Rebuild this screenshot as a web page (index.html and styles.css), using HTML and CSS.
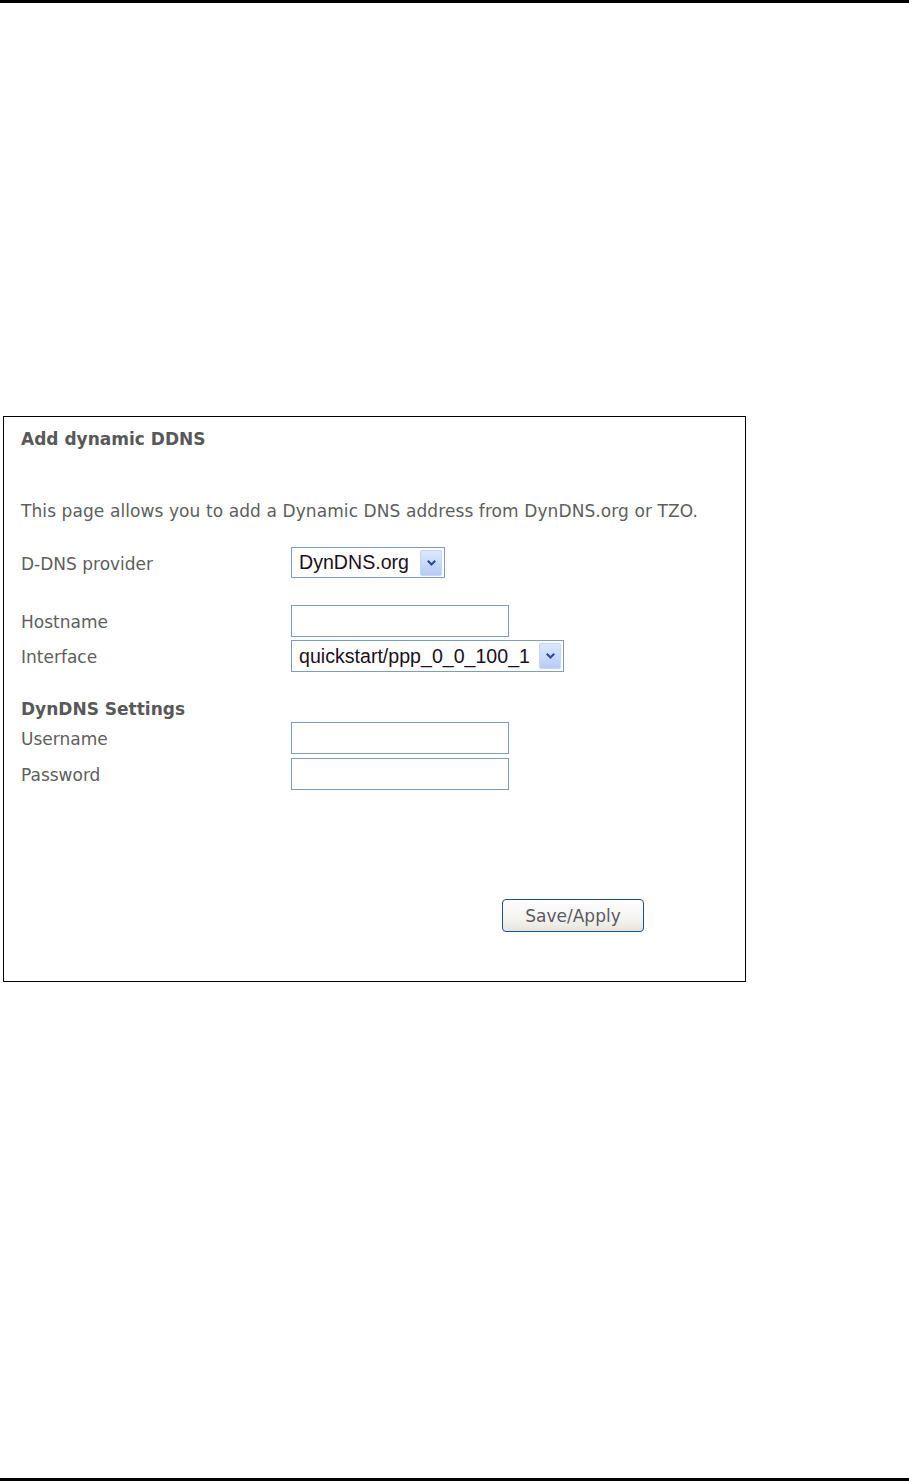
FILE: index.html
```html
<!DOCTYPE html>
<html>
<head>
<meta charset="utf-8">
<link rel="stylesheet" href="styles.css">
</head>
<body>
<div class="rule top"></div>
<div class="page">
  <div class="box">
    <h1 class="title">Add dynamic DDNS</h1>
    <p class="desc">This page allows you to add a Dynamic DNS address from DynDNS.org or TZO.</p>
    <div class="row provider">
      <span class="label">D-DNS provider</span>
      <div class="select sel-provider"><span class="val">DynDNS.org</span><span class="arrow"><svg width="11" height="8" viewBox="0 0 11 8"><path d="M1.8 1.8 L5.5 5.5 L9.2 1.8" fill="none" stroke="#2a4a94" stroke-width="2.1"/></svg></span></div>
    </div>
    <div class="row hostname">
      <span class="label">Hostname</span>
      <div class="input"></div>
    </div>
    <div class="row iface">
      <span class="label">Interface</span>
      <div class="select sel-iface"><span class="val">quickstart/ppp_0_0_100_1</span><span class="arrow"><svg width="11" height="8" viewBox="0 0 11 8"><path d="M1.8 1.8 L5.5 5.5 L9.2 1.8" fill="none" stroke="#2a4a94" stroke-width="2.1"/></svg></span></div>
    </div>
    <h2 class="sub">DynDNS Settings</h2>
    <div class="row user">
      <span class="label">Username</span>
      <div class="input"></div>
    </div>
    <div class="row pass">
      <span class="label">Password</span>
      <div class="input"></div>
    </div>
    <div class="actions">
      <button class="btn" type="button">Save/Apply</button>
    </div>
  </div>
</div>
<div class="rule bottom"></div>
</body>
</html>
```
FILE: styles.css
```css
html, body {
  margin: 0;
  padding: 0;
  background: #fff;
}
body {
  width: 909px;
  height: 1481px;
  position: relative;
  font-family: "DejaVu Sans", Verdana, sans-serif;
  color: #5e5e5e;
}
.rule {
  height: 3px;
  background: #000;
  width: 909px;
}
.rule.bottom {
  position: absolute;
  left: 0;
  top: 1478px;
}
.page {
  padding-top: 413px;
}
.box {
  margin-left: 3px;
  width: 741px;
  height: 564px;
  border: 1px solid #000;
  padding: 0;
  box-sizing: content-box;
}
.title {
  margin: 12px 0 0 17px;
  font-size: 17px;
  font-weight: bold;
  line-height: 20px;
  color: #585858;
}
.desc {
  margin: 52px 0 0 17px;
  font-size: 17px;
  line-height: 20px;
  letter-spacing: 0.09px;
}
.row {
  display: flex;
  align-items: center;
  margin-left: 17px;
}
.label {
  width: 270px;
  font-size: 17px;
  line-height: 20px;
  padding-top: 2px;
}
.provider { margin-top: 26px; height: 31px; }
.hostname { margin-top: 27px; height: 32px; }
.iface { margin-top: 3px; height: 32px; }
.user { margin-top: 3px; height: 32px; }
.pass { margin-top: 4px; height: 32px; }
.sub {
  margin: 27px 0 0 17px;
  font-size: 17px;
  font-weight: bold;
  line-height: 20px;
  color: #585858;
}
.input {
  width: 216px;
  height: 30px;
  border: 1px solid #7f9db9;
  background: #fff;
}
.select {
  display: flex;
  align-items: center;
  height: 29px;
  border: 1px solid #7f9db9;
  background: #fff;
  font-family: "Liberation Sans", Arial, sans-serif;
  font-size: 19.6px;
  color: #1c1020;
  padding: 0 0 0 7px;
  box-sizing: content-box;
}
.sel-provider { width: 145px; }
.sel-iface { width: 264px; height: 30px; }
.val {
  flex: 1;
  white-space: nowrap;
}
.arrow {
  width: 22px;
  height: 26px;
  margin-right: 2px;
  background: linear-gradient(#dce8fd, #b7cbf5);
  border: 1px solid #c6d5fb;
  border-radius: 2px;
  display: flex;
  align-items: center;
  justify-content: center;
  box-sizing: border-box;
}
.actions {
  margin-top: 109px;
  padding-left: 498px;
}
.btn {
  width: 142px;
  height: 33px;
  border: 1px solid #1f4f8a;
  border-radius: 4px;
  background: linear-gradient(#fefefe, #f4f4f0 60%, #e6e4dc);
  font-family: "DejaVu Sans", Verdana, sans-serif;
  font-size: 17px;
  color: #5a5a66;
  padding: 0;
}
```
